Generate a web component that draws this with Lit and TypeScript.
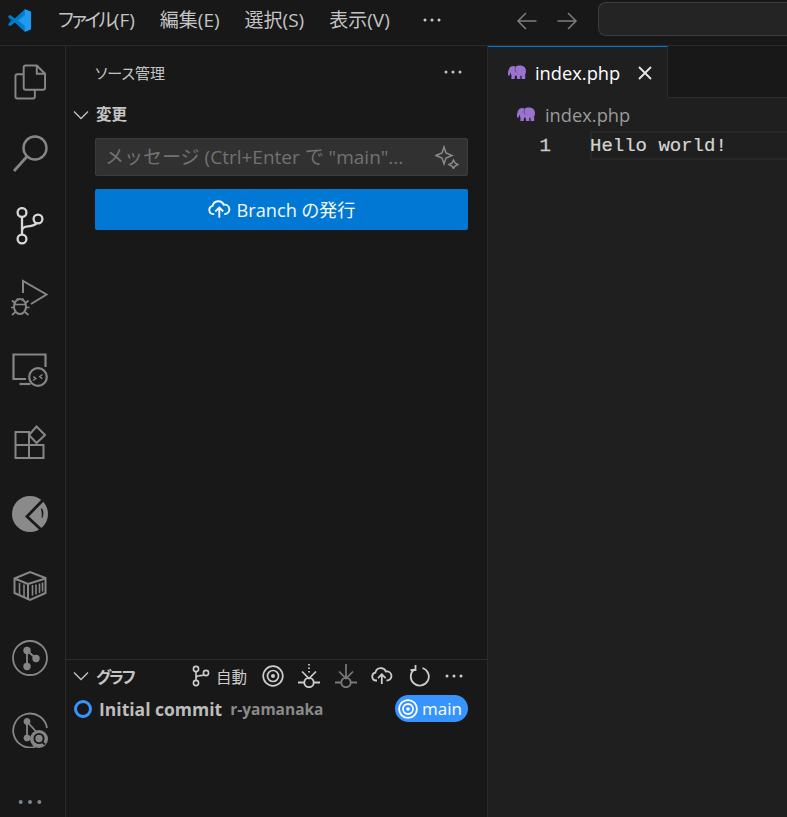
import { LitElement, html, css, svg } from "lit";
import { customElement } from "lit/decorators.js";

const ic = (w: number, h: number, vb: string, body: unknown, cls = "") =>
  html`<svg class=${cls} width=${w} height=${h} viewBox=${vb} fill="none" stroke="currentColor" stroke-width="1.4">${body}</svg>`;

const elephant = () => html`<svg width="20" height="17" viewBox="0 0 20 17"><path fill="#9a72cf" d="M1 9.500C1 5.500 3 2 6 2c1 0 2 .2 2.600.7C9.500 2 11 1.500 13 1.500c3.500 0 6 2.200 6 5.500 0 1.500-.3 2.500-1 3.500l.2 1.500v3h-3.500l-.3-3.500-1.200.4.200 3.100h-3.400l-.3-3.200H8l-.3 3.200H4.300l.2-3.500C4 11 3.500 9.500 3.500 8.500 3 9 2.800 10 2.800 11.500H1z"/><path fill="none" stroke="#5d3f8c" stroke-width=".9" d="M8.500 3c-.6 2-.6 4.500 1 5.500"/></svg>`;

const kebab = html`<svg width="20" height="6" viewBox="0 0 20 6" fill="currentColor"><circle cx="3" cy="3" r="1.500"/><circle cx="10" cy="3" r="1.500"/><circle cx="17" cy="3" r="1.500"/></svg>`;

const chevron = ic(18, 12, "0 0 18 12", svg`<path d="M2 2.500l7 7 7-7" stroke-width="1.300"/>`);

const cloud = (size = 22) => ic(size, size * 0.82, "0 0 22 18", svg`<path d="M6 13.500H5a4 4 0 0 1-.6-7.900A5.600 5.600 0 0 1 15 4.500a4.500 4.500 0 0 1 1.800 8.900L15.500 13.500" stroke-width="1.800"/><path d="M10.800 17V7.500M7 11l3.800-3.800 3.800 3.800" stroke-width="1.800"/>`);

const target = (size: number, sw = 1.700) => ic(size, size, "0 0 22 22", svg`<circle cx="11" cy="11" r="9.800" stroke-width=${sw}/><circle cx="11" cy="11" r="5.500" stroke-width=${sw}/><circle cx="11" cy="11" r="2" fill="currentColor" stroke="none"/>`);

const branchSmall = ic(18, 22, "0 0 18 22", svg`<circle cx="4" cy="4" r="2.600" stroke-width="1.600"/><circle cx="4" cy="18" r="2.600" stroke-width="1.600"/><circle cx="14" cy="8" r="2.600" stroke-width="1.600"/><path d="M4 6.600v8.800M4 13.500c0-2 1-2.500 3-2.700 3-.4 5-.6 5.500-1" stroke-width="1.600"/>`);

const ringBase = svg`<circle cx="11" cy="18.500" r="4.700" stroke-width="1.800"/><path d="M0 18.500h6.300M15.700 18.500H22" stroke-width="1.800"/>`;

const activity = [
  ic(33, 38, "0 0 34 38", svg`<path d="M10 11H3.500a2 2 0 0 0-2 2v21a2 2 0 0 0 2 2h16a2 2 0 0 0 2-2v-7" stroke-width="2"/><path d="M12 2h11.500l8.500 8.500V25a2 2 0 0 1-2 2H12a2 2 0 0 1-2-2V4a2 2 0 0 1 2-2z" stroke-width="2"/><path d="M23.500 2v8.500H32" stroke-width="2"/>`),
  ic(36, 38, "0 0 36 38", svg`<circle cx="23" cy="13" r="11.500" stroke-width="2.400"/><path d="M15 21.500L2 36" stroke-width="2.800"/>`),
  ic(28, 38, "0 0 28 38", svg`<circle cx="6" cy="5.500" r="4.400" stroke-width="2.300"/><circle cx="6" cy="32" r="4.400" stroke-width="2.300"/><circle cx="22" cy="12" r="4.400" stroke-width="2.300"/><path d="M6 10v17.500M6 24c0-3 2.500-4.500 6-4.700 5-.3 8-1.500 9-4" stroke-width="2.300"/>`),
  ic(38, 38, "0 0 38 38", svg`<path d="M12 14V2L35.500 15.500 20 25" stroke-width="2"/><ellipse cx="9" cy="27.500" rx="6" ry="7.500" stroke-width="2"/><path d="M3.500 25.500h11M1 21.500l3.500 3M17.500 21.500L14 24.500M0 28.500h3.500M18.500 28.500H15M1 36l3.500-3M17.500 36L14 33M6 19.500l1.500 1.500M12.500 19.500L11 21" stroke-width="1.700"/>`),
  ic(36, 34, "0 0 36 34", svg`<path d="M14 26H1.500V1.500h32V14" stroke-width="2.200"/><path d="M7.500 31h11" stroke-width="2.200"/><circle cx="26" cy="24" r="8.800" stroke-width="2.200"/><path d="M21 27.500l2.800-2-2.500-1.800M30.500 21.500l-2.800 2 2.500 2.200" stroke-width="1.500"/>`),
  ic(32, 34, "0 0 32 34", svg`<path d="M1.500 7H15v26H1.500zM1.500 20H29.500v13H15" stroke-width="2"/><path d="M22.500 1.500L31 10l-8.500 8L15 10z" stroke-width="2"/>`),
  html`<svg width="36" height="36" viewBox="0 0 36 36"><circle cx="18" cy="18" r="18" fill="#8a8a8a"/><path d="M30.500 4.500L15 20.500l15 14" fill="none" stroke="#181818" stroke-width="2.800"/><path d="M30 12.500c1.700 2 2 6 .3 9.500l-.8-.2c.6-3 .4-6.500-.8-9z" fill="#181818"/></svg>`,
  ic(34, 32, "0 0 34 32", svg`<path d="M1.500 8.500L17 2l15.500 6v15L17 30 1.500 23zM1.500 8.500L15 14v16M15 14l17.500-5.500" stroke-width="2"/><path d="M6.500 13v12M11 14.500v13M19.500 15v10.500M23 14.500v10M26.500 13.500v9.500M29.500 12.500v9" stroke-width="1.600"/>`),
  ic(36, 36, "0 0 36 36", svg`<circle cx="18" cy="18" r="17" stroke-width="1.800"/><circle cx="15" cy="10.500" r="3" fill="currentColor"/><circle cx="15" cy="26.500" r="3" fill="currentColor"/><circle cx="24" cy="18.500" r="3" fill="currentColor"/><path d="M15 10.500v16M15 10.500l9 8" stroke-width="1.800"/>`),
  html`<svg width="36" height="36" viewBox="0 0 36 36" fill="none" stroke="currentColor"><path d="M24 34.500A17 17 0 1 1 35 16" stroke-width="1.800"/><circle cx="15" cy="9.500" r="3" fill="currentColor"/><circle cx="15" cy="26" r="3" fill="currentColor"/><path d="M15 9.500v16M15 9.500l9 10" stroke-width="1.800"/><circle cx="27" cy="27" r="9" fill="currentColor" stroke="none"/><circle cx="27" cy="26.500" r="4.600" stroke="#181818" stroke-width="1.900"/><path d="M30 30l3 2.500" stroke="#181818" stroke-width="1.800"/></svg>`,
];

@customElement("app-root")
export class AppRoot extends LitElement {
  static styles = css`
    :host { display: block; width: 787px; height: 817px; overflow: hidden; background: #181818; color: #ccc; font-family: "Open Sans", "Noto Sans CJK JP", sans-serif; font-feature-settings: "palt"; }
    .title { height: 45px; border-bottom: 1px solid #2b2b2b; display: flex; align-items: center; }
    .logo { width: 58px; display: flex; flex: none; padding: 0 0 5px 7px; box-sizing: border-box; }
    .menu { display: flex; gap: 25px; font-size: 19px; color: #c4c4c4; align-items: center; margin-top: -7px; }
    .menu .kana { letter-spacing: -2.500px; }
    .menu .more { margin-left: 7px; color: #ccc; display: flex; margin-top: 2px; }
    .nav { display: flex; gap: 18px; margin-left: 74px; color: #7d7d7d; margin-top: -4px; }
    .cmd { margin-left: 20px; flex: 1; height: 34px; border: 1px solid #3d3d3d; border-right: none; border-radius: 8px 0 0 8px; background: #242424; box-sizing: border-box; margin-top: -8px; }
    .main { display: flex; height: 771px; }
    .act { width: 65px; border-right: 1px solid #2b2b2b; flex: none; display: flex; flex-direction: column; color: #868686; }
    .act .it { height: 72px; display: flex; align-items: center; justify-content: center; flex: none; padding-right: 5px; box-sizing: border-box; }
    .act .it.on { color: #d7d7d7; }
    .act .it.dots { color: #7d8590; }
    .act .it.dots svg { width: 28px; height: 8px; }
    .side { width: 421px; border-right: 1px solid #2b2b2b; flex: none; display: flex; flex-direction: column; }
    .side-h { height: 52px; flex: none; display: flex; align-items: center; justify-content: space-between; padding: 0 24px 0 29px; font-size: 15px; color: #c4c4c4; box-sizing: border-box; }
    .sec { height: 33px; flex: none; display: flex; align-items: center; padding-left: 6px; gap: 6px; font-size: 15.500px; font-weight: 700; color: #c4c4c4; box-sizing: border-box; }
    .sec span { padding-bottom: 2px; }
    .body { flex: 1; padding: 7px 19px 0 29px; display: flex; flex-direction: column; gap: 13px; }
    .input { height: 38px; flex: none; background: #313131; border: 1px solid #3c3c3c; border-radius: 2px; display: flex; align-items: center; justify-content: space-between; padding: 0 8px 0 9px; box-sizing: border-box; color: #727272; font-size: 19px; white-space: nowrap; font-feature-settings: normal; }
    .input span { padding-bottom: 3px; }
    .input svg { color: #8a8a8a; flex: none; }
    .btn { height: 41px; flex: none; background: #0078d4; border-radius: 2px; display: flex; align-items: center; justify-content: center; gap: 6px; color: #f4f8fc; font-size: 18.200px; }
    .btn span { padding-bottom: 2px; }
    .graph { flex: none; height: 158px; border-top: 1px solid #2b2b2b; box-sizing: border-box; }
    .graph-h { height: 32px; display: flex; align-items: center; padding: 0 23px 0 6px; color: #c4c4c4; }
    .graph-h .name { margin-left: 6px; font-size: 16px; font-weight: 700; letter-spacing: -2px; }
    .tools { margin-left: auto; display: flex; align-items: center; gap: 14.500px; color: #cccccc; }
    .tools .auto { display: flex; align-items: center; gap: 6px; font-size: 15.500px; }
    .tools .off { color: #7a7a7a; display: flex; }
    .commit { height: 34px; display: flex; align-items: center; padding: 0 19px 0 8px; }
    .dot { width: 18px; height: 18px; border: 3px solid #3794ff; border-radius: 50%; box-sizing: border-box; flex: none; }
    .msg { margin-left: 7px; font-size: 17.500px; font-weight: 700; color: #bdbdbd; }
    .auth { margin-left: 8px; font-size: 15.500px; font-weight: 700; color: #8a8a8a; }
    .pill { margin-left: auto; height: 27px; background: #3794ff; border-radius: 14px; display: flex; align-items: center; gap: 4px; padding: 0 6px 0 3px; font-size: 17px; font-weight: 500; color: #fff; margin-top: -1px; }
    .editor { flex: 1; background: #1f1f1f; display: flex; flex-direction: column; min-width: 0; }
    .tabs { height: 52px; flex: none; background: #181818; display: flex; border-bottom: 1px solid #2b2b2b; box-sizing: border-box; }
    .tab { width: 180px; height: 52px; flex: none; box-sizing: border-box; background: #1f1f1f; border-top: 1px solid #0078d4; border-right: 1px solid #2b2b2b; display: flex; align-items: center; padding: 0 0 0 19px; color: #fff; font-size: 18.300px; }
    .tab span { margin-left: 8px; }
    .tab svg.x { margin-left: 18px; color: #e8e8e8; }
    .crumb { height: 33px; flex: none; display: flex; align-items: center; padding-left: 28px; gap: 9px; color: #9a9a9a; font-size: 18.300px; }
    .line { display: flex; height: 29px; }
    .ln { width: 63px; text-align: right; font-family: "Liberation Mono", monospace; font-size: 19px; color: #cccccc; line-height: 31px; height: 29px; flex: none; -webkit-text-stroke: 0.3px #cccccc; }
    .code { margin-left: 39px; flex: 1; font-family: "Liberation Mono", monospace; font-size: 19px; color: #d4d4d4; line-height: 31px; height: 29px; box-shadow: inset 2px 2px 0 #282828, inset 0 -2px 0 #282828; white-space: pre; -webkit-text-stroke: 0.2px #d4d4d4; }
  `;

  render() {
    return html`
      <div class="title">
        <div class="logo"><svg width="25" height="25" viewBox="0 0 26 26"><path fill="#0065a9" d="M1 9.300l2.300-1.700 5.800 4.400v2.100l-5.800 4.300L1 16.800l3-3.700z"/><path fill="#007acc" d="M18.500 1.200L8.200 11 3.300 7.300 1 8.600l5.300 4.500L1 17.600l2.300 1.200 4.900-3.700 10.300 9.700 6.500-2.600V3.800z"/><path fill="#1f9cf0" d="M18.500 1.200l6.500 2.600v18.400l-6.500 2.600zM18.500 7.500l-7 5.500 7 5.500z"/></svg></div>
        <div class="menu">
          <span><span class="kana">ファイル</span>(F)</span><span>編集(E)</span><span>選択(S)</span><span>表示(V)</span>
          <span class="more">${kebab}</span>
        </div>
        <div class="nav">
          ${ic(22, 20, "0 0 22 20", svg`<path d="M20.500 10H2M10 2l-8 8 8 8" stroke-width="1.500"/>`)}
          ${ic(22, 20, "0 0 22 20", svg`<path d="M1.500 10H20M12 2l8 8-8 8" stroke-width="1.500"/>`)}
        </div>
        <div class="cmd"></div>
      </div>
      <div class="main">
        <div class="act">
          ${activity.map((a, i) => html`<div class="it ${i === 2 ? "on" : ""}">${a}</div>`)}
          <div class="it dots">${kebab}</div>
        </div>
        <div class="side">
          <div class="side-h"><span>ソース管理</span>${kebab}</div>
          <div class="sec">${chevron}<span>変更</span></div>
          <div class="body">
            <div class="input"><span>メッセージ (Ctrl+Enter で "main"...</span>
              ${ic(24, 24, "0 0 24 24", svg`<path d="M9 2l2 6 6 2.500-6 2.500-2 6-2-6-6-2.500 6-2.500z" stroke-width="1.500"/><path d="M18.500 15l1.500 3 3 1.500-3 1.500-1.500 2.500-1.500-2.500-3-1.500 3-1.500z" stroke-width="1.500"/>`)}
            </div>
            <div class="btn">${cloud(23)}<span>Branch の発行</span></div>
          </div>
          <div class="graph">
            <div class="graph-h">
              ${chevron}<span class="name">グラフ</span>
              <div class="tools">
                <span class="auto">${branchSmall}<span>自動</span></span>
                ${target(22)}
                ${ic(22, 24, "0 0 22 24", svg`<path d="M11 0v1.500M11 3.500V5M11 7v1.500M4 7.500l7 7 7-7" stroke-width="1.700"/>${ringBase}`)}
                <span class="off">${ic(22, 24, "0 0 22 24", svg`<path d="M11 0v14.500M4 7.500l7 7 7-7" stroke-width="1.700"/>${ringBase}`)}</span>
                ${cloud(22)}
                ${ic(22, 24, "0 0 22 24", svg`<path d="M6.500 5.300A9 9 0 1 0 14.500 4" stroke-width="1.800"/><path d="M7.500 1v5H2.500" stroke-width="1.800"/>`)}
                ${kebab}
              </div>
            </div>
            <div class="commit">
              <span class="dot"></span><span class="msg">Initial commit</span><span class="auth">r-yamanaka</span>
              <span class="pill">${target(20, 2)}<span>main</span></span>
            </div>
          </div>
        </div>
        <div class="editor">
          <div class="tabs"><div class="tab">${elephant()}<span>index.php</span>
            ${ic(14, 14, "0 0 14 14", svg`<path d="M1 1l12 12M13 1L1 13" stroke-width="1.800"/>`, "x")}
          </div></div>
          <div class="crumb">${elephant()}<span>index.php</span></div>
          <div class="line"><div class="ln">1</div><div class="code">Hello world!</div></div>
        </div>
      </div>
    `;
  }
}
